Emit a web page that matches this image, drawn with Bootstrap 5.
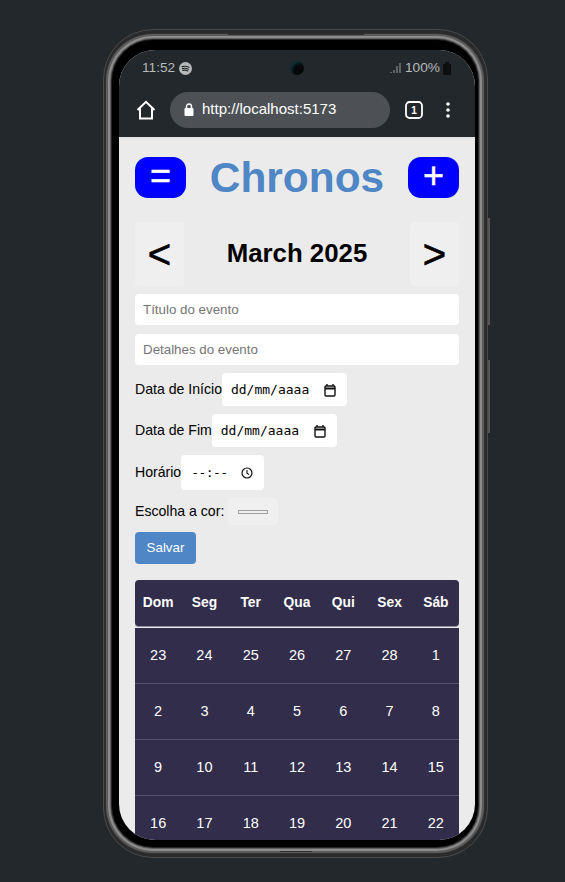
<!DOCTYPE html>
<html lang="pt-BR">
<head>
<meta charset="utf-8">
<title>Chronos</title>
<link href="https://cdn.jsdelivr.net/npm/bootstrap@5.3.0/dist/css/bootstrap.min.css" rel="stylesheet">
<style>
html,body{height:882px;overflow:hidden}
body{background:#22282c;font-family:"Liberation Sans",Arial,sans-serif;color:#000;padding:29px 0 0 103px}
.phone-outer{position:relative;width:385px;height:829px;border-radius:50px;background:#2a2a2a;border:1px solid #4a4a4a;padding:10px 9px 10px 8px}
.phone-ring{height:100%;border-radius:41px;background:#000;padding:10px 3px 7px 7px;box-shadow:0 0 0 1px #262626,0 0 0 2px #5e5e5e,0 0 0 4px #8c8c8c,0 0 0 6px #5c5c5c,0 0 0 7px #333}
.phone-screen{height:790px;border-radius:36px;overflow:hidden;background:#ebebeb;display:flex;flex-direction:column}
.side-key{position:absolute;background:#555;width:2px;right:-3px}
.key-a{top:188px;height:107px}
.key-b{top:330px;height:73px}
.speaker{position:absolute;background:#2e2e2e;height:2px;left:124px;width:136px;top:3px;z-index:1}
.chin{position:absolute;background:#2e2e2e;height:1px;left:176px;width:32px;bottom:5px;z-index:1}
.chrome-bar{background:#23282c;color:#fff;flex:0 0 87px}
.status-row{height:37px;padding:0 24px 0 23px;color:#b6b8ba;font-size:13.7px;position:relative}
.camera{position:absolute;left:171px;top:11px;width:14px;height:14px;border-radius:50%;background:#050708;box-shadow:inset 2px 2px 3px #12343a}
.battery-glyph{margin-left:-1px}
.url-row{height:50px;padding:0 24px 5px 17px}
.url-pill{width:220px;height:36px;border-radius:18px;background:#4d5155;font-size:15px;padding:0 14px;margin-left:14px;margin-right:15px;color:#fff}
.app-area{padding:20px 16px 0;flex:1;overflow:hidden;box-shadow:inset 0 5px 4px -4px #dcdcdc}
.square-action{width:51px;height:41px;border-radius:13px;background:#00f;border:0;color:#fff;font-size:36px;font-weight:400;-webkit-text-stroke:.5px #fff;line-height:1;padding:0 0 4px;font-family:"Liberation Sans",Arial,sans-serif}
.app-title{color:#4e86c6;font-size:42.4px;font-weight:700;line-height:41px;margin:0}
.month-row{margin-top:24px;margin-bottom:8px;height:64px}
.month-step{width:49px;height:64px;background:#efefef;border:0;border-radius:4px;color:#000;font-size:40px;font-weight:400;-webkit-text-stroke:.7px #000;line-height:1;padding:0}
.month-name{font-size:25.8px;font-weight:700;margin:0;line-height:1}
.text-field{display:block;width:100%;height:31px;border:0;border-radius:4px;background:#fff;padding:0 8px;font-size:13.33px;margin-bottom:9px;font-family:"Liberation Sans",Arial,sans-serif;outline:0}
.text-field::placeholder{color:#757575;opacity:1}
.field-row{font-size:14.1px}
.fake-picker{background:#fff;border-radius:4px;font-family:"DejaVu Sans Mono",monospace;font-size:13px;color:#000}
.picker-date{width:125px;height:33px;padding:0 11px 0 9px}
.picker-time{width:83px;height:35px;padding:0 11px 0 10px}
.time-blank{letter-spacing:-.6px}
.swatch-box{width:50px;height:27px;background:#efefef;border-radius:4px;margin-left:4px}
.swatch-line{width:30px;height:4px;background:#efefef;border:1px solid #a0a0a0;display:block}
.save-btn{background:#4e86c6;color:#fff;border:0;border-radius:4px;width:61px;height:32px;font-size:13.33px;padding:0}
.cal-head{background:#312d4b;color:#fff;height:47px;border-radius:4px;margin-top:16px;padding-top:1px;font-size:13.8px;font-weight:700;border-bottom:1px solid #8f8ca0;display:grid;grid-template-columns:repeat(7,1fr);align-items:center;text-align:center}
.cal-body{background:#312d4b;color:#fff;font-size:14.5px;margin-top:1px}
.cal-week{height:56px;display:grid;grid-template-columns:repeat(7,1fr);align-items:center;text-align:center;border-bottom:1px solid #56526d}
</style>
</head>
<body>
<div class="phone-outer">
  <span class="speaker"></span><span class="chin"></span>
  <span class="side-key key-a"></span><span class="side-key key-b"></span>
  <div class="phone-ring">
    <div class="phone-screen">
      <div class="chrome-bar">
        <div class="status-row d-flex align-items-center justify-content-between">
          <div class="d-flex align-items-center gap-1"><span>11:52</span>
            <svg width="13" height="13" viewBox="0 0 13 13"><circle cx="6.5" cy="6.5" r="6.5" fill="#b6b8ba"/><path d="M3 4.6c2.4-.7 4.7-.5 7 .6M3.4 6.6c2-.5 4-.4 6 .6M3.8 8.4c1.700-.4 3.400-.3 5 .5" stroke="#23282c" stroke-width="1.100" fill="none" stroke-linecap="round"/></svg>
          </div>
          <span class="camera"></span>
          <div class="d-flex align-items-center gap-1">
            <svg width="11" height="12" viewBox="0 0 11 12"><path d="M1 10v1M4 8v3M7 4v7M10 1v10" stroke="#9a9c9e" stroke-width="1" fill="none"/></svg>
            <span>100%</span>
            <svg class="battery-glyph" width="8" height="13" viewBox="0 0 8 13"><path d="M0 2h2V0h4v2h2v11H0z" fill="#0c0e10"/></svg>
          </div>
        </div>
        <div class="url-row d-flex align-items-center">
          <svg width="20" height="20" viewBox="0 0 20 20"><path d="M1.500 10 10 1.800 18.500 10M4 8v10.500h12V8" fill="none" stroke="#fff" stroke-width="2"/></svg>
          <div class="url-pill d-flex align-items-center gap-2">
            <svg width="10" height="13" viewBox="0 0 10 13"><path d="M2.500 5V3.500a2.500 2.500 0 0 1 5 0V5" fill="none" stroke="#fff" stroke-width="1.400"/><rect x="0.500" y="5" width="9" height="8" rx="1" fill="#fff"/></svg>
            <span>http://localhost:5173</span>
          </div>
          <svg width="18" height="18" viewBox="0 0 18 18"><rect x="1" y="1" width="16" height="16" rx="3.500" fill="none" stroke="#fff" stroke-width="1.800"/><text x="9" y="13" font-size="10" font-weight="700" fill="#fff" text-anchor="middle" font-family="Liberation Sans">1</text></svg>
          <svg class="ms-auto" width="6" height="18" viewBox="0 0 6 18"><circle cx="3" cy="3" r="1.800" fill="#fff"/><circle cx="3" cy="9" r="1.800" fill="#fff"/><circle cx="3" cy="15" r="1.800" fill="#fff"/></svg>
        </div>
      </div>
      <div class="app-area">
        <div class="d-flex align-items-center justify-content-between">
          <button class="square-action">=</button>
          <h1 class="app-title">Chronos</h1>
          <button class="square-action">+</button>
        </div>
        <div class="month-row d-flex align-items-center justify-content-between">
          <button class="month-step">&lt;</button>
          <h2 class="month-name">March 2025</h2>
          <button class="month-step">&gt;</button>
        </div>
        <input class="text-field" placeholder="Título do evento">
        <input class="text-field mb-2" placeholder="Detalhes do evento">
        <div class="field-row d-flex align-items-center">
          <span>Data de Início</span>
          <div class="fake-picker picker-date d-flex align-items-center justify-content-between"><span>dd/mm/aaaa</span>
            <svg width="12" height="14" viewBox="0 0 12 14"><rect x="1" y="3" width="10" height="10" rx="1" fill="none" stroke="#111" stroke-width="1.400"/><path d="M1 5.500h10" stroke="#111" stroke-width="2"/><path d="M3 1v2M9 1v2" stroke="#111" stroke-width="1.400"/></svg>
          </div>
        </div>
        <div class="field-row d-flex align-items-center mt-2">
          <span>Data de Fim</span>
          <div class="fake-picker picker-date d-flex align-items-center justify-content-between"><span>dd/mm/aaaa</span>
            <svg width="12" height="14" viewBox="0 0 12 14"><rect x="1" y="3" width="10" height="10" rx="1" fill="none" stroke="#111" stroke-width="1.400"/><path d="M1 5.500h10" stroke="#111" stroke-width="2"/><path d="M3 1v2M9 1v2" stroke="#111" stroke-width="1.400"/></svg>
          </div>
        </div>
        <div class="field-row d-flex align-items-center mt-2">
          <span>Horário</span>
          <div class="fake-picker picker-time d-flex align-items-center justify-content-between"><span class="time-blank">--:--</span>
            <svg width="12" height="12" viewBox="0 0 12 12"><circle cx="6" cy="6" r="5" fill="none" stroke="#111" stroke-width="1.200"/><path d="M6 3v3.200l2 1.300" fill="none" stroke="#111" stroke-width="1.100"/></svg>
          </div>
        </div>
        <div class="field-row d-flex align-items-center mt-2">
          <span>Escolha a cor:</span>
          <div class="swatch-box d-flex align-items-center justify-content-center"><span class="swatch-line"></span></div>
        </div>
        <button class="save-btn d-block" style="margin-top:7px">Salvar</button>
        <div class="cal-head"><span>Dom</span><span>Seg</span><span>Ter</span><span>Qua</span><span>Qui</span><span>Sex</span><span>Sáb</span></div>
        <div class="cal-body">
          <div class="cal-week"><span>23</span><span>24</span><span>25</span><span>26</span><span>27</span><span>28</span><span>1</span></div>
          <div class="cal-week"><span>2</span><span>3</span><span>4</span><span>5</span><span>6</span><span>7</span><span>8</span></div>
          <div class="cal-week"><span>9</span><span>10</span><span>11</span><span>12</span><span>13</span><span>14</span><span>15</span></div>
          <div class="cal-week"><span>16</span><span>17</span><span>18</span><span>19</span><span>20</span><span>21</span><span>22</span></div>
        </div>
      </div>
    </div>
  </div>
</div>
<script src="https://cdn.jsdelivr.net/npm/bootstrap@5.3.0/dist/js/bootstrap.bundle.min.js"></script>
</body>
</html>
